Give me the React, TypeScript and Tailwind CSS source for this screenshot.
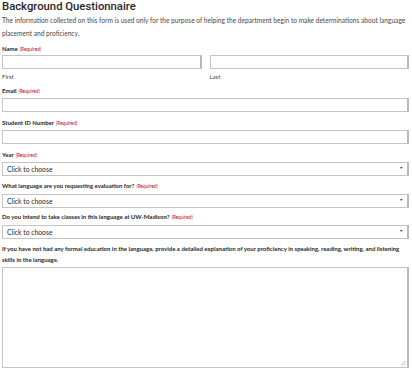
import React from "react";

function Req() {
  return <span className="ml-[2px] text-[4.8px] font-normal text-[#c5050c]">(Required)</span>;
}

function Label({ children, required = true }: { children: React.ReactNode; required?: boolean }) {
  return (
    <div className="h-[10px] text-[6px] leading-[10px] font-bold text-[#282728]">
      {children}
      {required && <Req />}
    </div>
  );
}

function TextInput({ className = "" }: { className?: string }) {
  return <div className={"h-[14px] border border-[#c4c4c4] border-r-2 border-r-[#b8b8b8] bg-white " + className} />;
}

function Select() {
  return (
    <div className="h-[14px] flex items-center justify-between border border-[#c4c4c4] border-r-2 border-r-[#b8b8b8] bg-white pl-[4px] pr-[4px]">
      <span className="text-[6.8px] text-[#282728]">Click to choose</span>
      <span className="text-[3.5px] text-[#222] leading-none">▼</span>
    </div>
  );
}

export default function App() {
  return (
    <div className="w-[412px] h-[372px] bg-white pl-[2px] pr-[3px] text-[#282728]" style={{ fontFamily: "Lato, 'Open Sans', sans-serif" }}>
      <h1 className="h-[14px] text-[11.3px] leading-[14px] font-medium" style={{ fontFamily: "Roboto, sans-serif" }}>
        Background Questionnaire
      </h1>
      <p className="text-[6.6px] leading-[12.5px] text-[#494949]">
        The information collected on this form is used only for the purpose of helping the department begin to make determinations about language placement and proficiency.
      </p>

      <div className="mt-[5px] flex flex-col">
        <Label>Name</Label>
        <div className="mt-[1px] flex gap-[8px]">
          <div className="flex-1">
            <TextInput />
            <div className="mt-[3px] h-[10px] text-[6px] leading-[10px] text-[#494949]">First</div>
          </div>
          <div className="flex-1">
            <TextInput />
            <div className="mt-[3px] h-[10px] text-[6px] leading-[10px] text-[#494949]">Last</div>
          </div>
        </div>

        <div className="mt-[4px]">
          <Label>Email</Label>
          <TextInput className="mt-[2px]" />
        </div>
        <div className="mt-[6px]">
          <Label>Student ID Number</Label>
          <TextInput className="mt-[2px]" />
        </div>
        <div className="mt-[6px]">
          <Label>Year</Label>
          <div className="mt-[2px]"><Select /></div>
        </div>
        <div className="mt-[5px]">
          <Label>What language are you requesting evaluation for?</Label>
          <div className="mt-[3px]"><Select /></div>
        </div>
        <div className="mt-[4px]">
          <Label>Do you intend to take classes in this language at UW-Madison?</Label>
          <div className="mt-[3px]"><Select /></div>
        </div>
        <div className="mt-[4px]">
          <div className="text-[6px] leading-[11px] font-bold text-[#282728]">
            If you have not had any formal education in the language, provide a detailed explanation of your proficiency in speaking, reading, writing, and listening skills in the language.
          </div>
          <div className="relative mt-[2px] h-[101px] border border-[#c4c4c4] border-r-2 border-r-[#b8b8b8] bg-white">
            <svg className="absolute right-[1px] bottom-[1px]" width="6" height="6" viewBox="0 0 6 6">
              <path d="M5.5 1 L1 5.5 M5.5 3.5 L3.5 5.5" stroke="#999" strokeWidth="0.7" />
            </svg>
          </div>
        </div>
      </div>
    </div>
  );
}
